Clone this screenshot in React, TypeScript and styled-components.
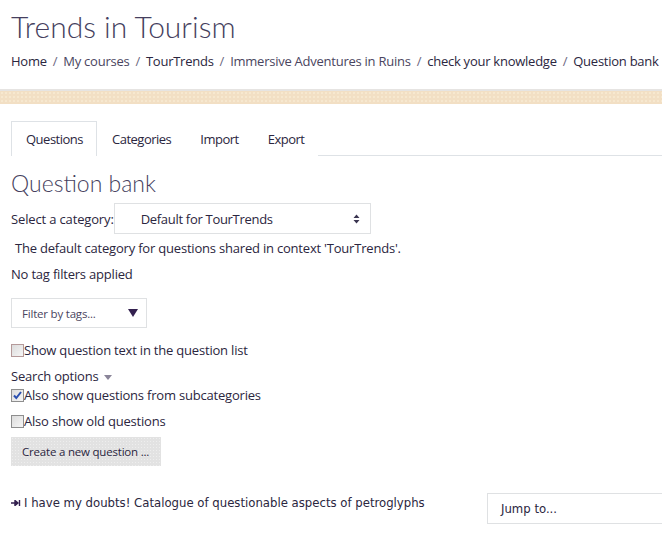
import * as React from "react";
import styled, { createGlobalStyle } from "styled-components";

const GlobalStyle = createGlobalStyle`
  html, body {
    margin: 0;
    padding: 0;
    background: #fff;
    overflow: hidden;
  }
  body {
    font-family: "Open Sans", "Noto Sans", sans-serif;
    color: #2b2640;
  }
`;

const Page = styled.div`
  width: 662px;
  height: 536px;
  overflow: hidden;
`;

const Header = styled.header`
  padding: 8px 0 0 11px;
`;

const Title = styled.h1`
  margin: 0;
  font-family: Lato, "Open Sans", sans-serif;
  font-size: 30px;
  font-weight: 300;
  line-height: 36px;
  color: #463f5e;
`;

const Crumbs = styled.nav`
  display: flex;
  margin-top: 8px;
  font-size: 13px;
  line-height: 18px;
  white-space: nowrap;
  letter-spacing: -0.25px;
`;

const Crumb = styled.span<{ $muted?: boolean }>`
  color: ${({ $muted }) => ($muted ? "#4a4560" : "#2b2640")};
`;

const Sep = styled.span`
  color: #6b6680;
  padding: 0 6px;
`;

const Band = styled.div`
  margin-top: 19px;
  height: 13px;
  border-top: 2px solid #e6e4e2;
  background-color: #f2dfc4;
  background-image: radial-gradient(#fbf1dc 0.6px, transparent 0.8px);
  background-size: 4px 4px;
`;

const Main = styled.main`
  padding: 17px 0 0 11px;
`;

const Tabs = styled.div`
  display: flex;
  border-bottom: 1px solid #dee2e6;
  height: 34px;
`;

const Tab = styled.div<{ $active?: boolean }>`
  display: flex;
  align-items: center;
  padding: 0 13px 0 14px;
  font-size: 13px;
  letter-spacing: -0.5px;
  color: #2b2640;
  border: 1px solid ${({ $active }) => ($active ? "#dee2e6" : "transparent")};
  border-bottom: none;
  margin-bottom: -1px;
  background: #fff;
`;

const Heading = styled.h2`
  margin: 13px 0 0;
  font-family: Lato, "Open Sans", sans-serif;
  font-size: 23px;
  font-weight: 300;
  line-height: 29px;
  color: #463f5e;
`;

const CategoryRow = styled.div`
  display: flex;
  align-items: center;
  margin-top: 5px;
  font-size: 13px;
  letter-spacing: -0.15px;
`;

const SelectBox = styled.div`
  position: relative;
  display: flex;
  align-items: center;
  box-sizing: border-box;
  width: 257px;
  height: 31px;
  margin-left: 0;
  padding-left: 26px;
  border: 1px solid #dfe1e3;
  font-size: 13px;
  letter-spacing: -0.3px;
  color: #2b2640;
`;

const Arrows = styled.svg`
  position: absolute;
  right: 10px;
  top: 10px;
`;

const Para = styled.p<{ $indent?: number; $top?: number }>`
  margin: ${({ $top }) => $top ?? 0}px 0 0 ${({ $indent }) => $indent ?? 0}px;
  font-size: 13px;
  line-height: 18px;
  letter-spacing: -0.2px;
`;

const FilterBox = styled.div`
  display: flex;
  align-items: center;
  justify-content: space-between;
  box-sizing: border-box;
  width: 136px;
  height: 30px;
  margin-top: 15px;
  padding: 0 8px 0 10px;
  border: 1px solid #dfe1e3;
  font-size: 11.5px;
  color: #4a4560;
  letter-spacing: -0.2px;
`;

const Triangle = styled.span`
  width: 0;
  height: 0;
  border-left: 5px solid transparent;
  border-right: 5px solid transparent;
  border-top: 8px solid #33204f;
`;

const CheckRow = styled.label<{ $top: number }>`
  display: flex;
  align-items: center;
  margin-top: ${({ $top }) => $top}px;
  font-size: 13px;
  line-height: 18px;
  letter-spacing: -0.2px;
`;

const Box = styled.span<{ $red?: boolean }>`
  position: relative;
  box-sizing: border-box;
  width: 13px;
  height: 13px;
  border: 1px solid ${({ $red }) => ($red ? "#b59a9a" : "#8e8e8e")};
  background: linear-gradient(135deg, #dcdcdc, #f6f6f6);
`;

const SearchToggle = styled.div`
  display: flex;
  align-items: center;
  gap: 6px;
  margin-top: 8px;
  font-size: 13px;
  line-height: 18px;
  letter-spacing: -0.2px;
`;

const Caret = styled.span`
  width: 0;
  height: 0;
  border-left: 4px solid transparent;
  border-right: 4px solid transparent;
  border-top: 5px solid #8a8599;
  margin-top: 2px;
`;

const Button = styled.div`
  display: flex;
  align-items: center;
  box-sizing: border-box;
  width: 150px;
  height: 29px;
  margin-top: 7px;
  padding-left: 11px;
  font-size: 11.5px;
  color: #2b2640;
  letter-spacing: -0.2px;
  background-color: #e2e2e2;
  background-image: radial-gradient(#eeeeee 0.5px, transparent 0.7px);
  background-size: 3px 3px;
`;

const Footer = styled.div`
  display: flex;
  align-items: flex-start;
  justify-content: space-between;
  margin-top: 27px;
`;

const PrevLink = styled.div`
  display: flex;
  align-items: center;
  gap: 3px;
  margin-top: 2px;
  font-family: "Liberation Sans Narrow", "DejaVu Sans Condensed", "Liberation Sans", sans-serif;
  font-size: 13px;
  color: #2b2640;
`;

const JumpBox = styled.div`
  display: flex;
  align-items: center;
  box-sizing: border-box;
  width: 175px;
  height: 31px;
  padding-left: 13px;
  border: 1px solid #dfe1e3;
  border-right: none;
  font-family: "Liberation Sans Narrow", "DejaVu Sans Condensed", "Liberation Sans", sans-serif;
  font-size: 13px;
  color: #2b2640;
`;

function Check({ checked, red }: { checked?: boolean; red?: boolean }) {
  return (
    <Box $red={red}>
      {checked && (
        <svg width="11" height="11" viewBox="0 0 11 11" style={{ position: "absolute", left: 0, top: 0 }}>
          <path d="M2 5.5 L4.3 8 L9 2" fill="none" stroke="#2a4fb0" strokeWidth="2" />
        </svg>
      )}
    </Box>
  );
}

export default function App() {
  const crumbs = ["Home", "My courses", "TourTrends", "Immersive Adventures in Ruins", "check your knowledge", "Question bank"];
  return (
    <Page>
      <GlobalStyle />
      <Header>
        <Title>Trends in Tourism</Title>
        <Crumbs>
          {crumbs.map((c, i) => (
            <React.Fragment key={c}>
              {i > 0 && <Sep>/</Sep>}
              <Crumb $muted={i === 1 || i === 3}>{c}</Crumb>
            </React.Fragment>
          ))}
        </Crumbs>
      </Header>
      <Band />
      <Main>
        <Tabs>
          <Tab $active>Questions</Tab>
          <Tab>Categories</Tab>
          <Tab>Import</Tab>
          <Tab>Export</Tab>
        </Tabs>
        <Heading>Question bank</Heading>
        <CategoryRow>
          Select a category:
          <SelectBox>
            Default for TourTrends
            <Arrows width="7" height="10" viewBox="0 0 7 10">
              <path d="M0.5 4 L3.5 0.5 L6.5 4 Z M0.5 6 L3.5 9.5 L6.5 6 Z" fill="#3a3550" />
            </Arrows>
          </SelectBox>
        </CategoryRow>
        <Para $indent={4} $top={5}>The default category for questions shared in context 'TourTrends'.</Para>
        <Para $top={8}>No tag filters applied</Para>
        <FilterBox>
          Filter by tags...
          <Triangle />
        </FilterBox>
        <CheckRow $top={13}>
          <Check red />
          Show question text in the question list
        </CheckRow>
        <SearchToggle>
          Search options
          <Caret />
        </SearchToggle>
        <CheckRow $top={1}>
          <Check checked />
          Also show questions from subcategories
        </CheckRow>
        <CheckRow $top={8}>
          <Check />
          Also show old questions
        </CheckRow>
        <Button>Create a new question ...</Button>
        <Footer>
          <PrevLink>
            <svg width="10" height="6" viewBox="0 0 10 6">
              <path d="M0 3 H7 M4 0.5 L7 3 L4 5.5 Z" stroke="#33204f" strokeWidth="1.4" fill="#33204f" />
              <path d="M8.5 0 V6" stroke="#33204f" strokeWidth="1.4" />
            </svg>
            I have my doubts! Catalogue of questionable aspects of petroglyphs
          </PrevLink>
          <JumpBox>Jump to...</JumpBox>
        </Footer>
      </Main>
    </Page>
  );
}
